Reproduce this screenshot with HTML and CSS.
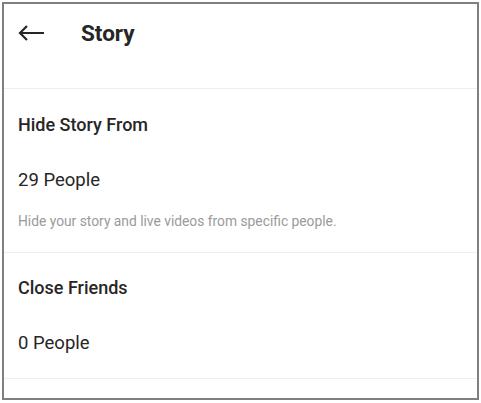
FILE: index.html
```html
<!DOCTYPE html>
<html>
<head>
<meta charset="utf-8">
<link rel="stylesheet" href="styles.css">
</head>
<body>
<div class="frame">
  <header class="topbar">
    <div class="bar">
      <svg class="back" width="28" height="18" viewBox="0 0 28 18"><path d="M27 9H3M10 2L3 9l7 7" fill="none" stroke="#262626" stroke-width="2.2"/></svg>
      <h1 class="title">Story</h1>
    </div>
  </header>
  <section class="group first">
    <h2 class="label">Hide Story From</h2>
    <div class="value">29 People</div>
    <p class="desc">Hide your story and live videos from specific people.</p>
  </section>
  <section class="group">
    <h2 class="label">Close Friends</h2>
    <div class="value">0 People</div>
  </section>
</div>
</body>
</html>
```
FILE: styles.css
```css
html, body { margin: 0; padding: 0; background: #fff; }
body { font-family: Roboto, "Liberation Sans", sans-serif; color: #262626; }
.frame {
  margin: 2px;
  width: 473px;
  height: 394px;
  border: 2px solid #7f7f7f;
  overflow: hidden;
}
.topbar { height: 84px; border-bottom: 1px solid #efefef; }
.bar { height: 58px; display: flex; align-items: center; padding-left: 13px; }
.back { display: block; }
.title { margin: 0 0 0 36px; font-size: 22.5px; font-weight: 700; line-height: 26px; }
.group { border-bottom: 1px solid #efefef; padding: 24px 14px 23px; }
.group.first { padding-top: 25px; padding-bottom: 22px; }
.label { margin: 0; font-size: 18px; font-weight: 500; line-height: 22px; }
.value { margin-top: 32px; font-size: 18.5px; line-height: 24px; }
.desc { margin: 20px 0 0; font-size: 13.8px; line-height: 18px; color: #9a9a9a; }
```
